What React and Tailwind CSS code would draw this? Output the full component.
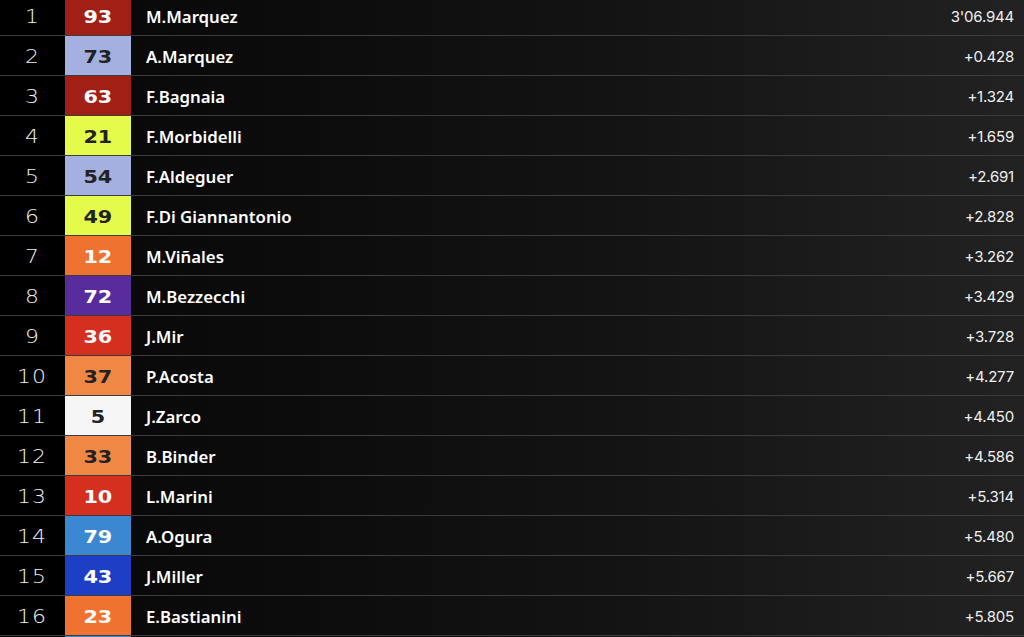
import React from "react";

const rows = [
  [1, "93", "M.Marquez", "3'06.944", "bg-[#a11f15]", "text-white"],
  [2, "73", "A.Marquez", "+0.428", "bg-[#a3b0e0]", "text-[#222]"],
  [3, "63", "F.Bagnaia", "+1.324", "bg-[#a11f15]", "text-white"],
  [4, "21", "F.Morbidelli", "+1.659", "bg-[#e5fb4c]", "text-[#222]"],
  [5, "54", "F.Aldeguer", "+2.691", "bg-[#a3b0e0]", "text-[#222]"],
  [6, "49", "F.Di Giannantonio", "+2.828", "bg-[#e5fb4c]", "text-[#222]"],
  [7, "12", "M.Viñales", "+3.262", "bg-[#ef7231]", "text-white"],
  [8, "72", "M.Bezzecchi", "+3.429", "bg-[#582c9c]", "text-white"],
  [9, "36", "J.Mir", "+3.728", "bg-[#d52f20]", "text-white"],
  [10, "37", "P.Acosta", "+4.277", "bg-[#f08845]", "text-[#222]"],
  [11, "5", "J.Zarco", "+4.450", "bg-[#f6f6f6]", "text-[#222]"],
  [12, "33", "B.Binder", "+4.586", "bg-[#f08845]", "text-[#222]"],
  [13, "10", "L.Marini", "+5.314", "bg-[#d52f20]", "text-white"],
  [14, "79", "A.Ogura", "+5.480", "bg-[#3b87d2]", "text-white"],
  [15, "43", "J.Miller", "+5.667", "bg-[#1c3fc6]", "text-white"],
  [16, "23", "E.Bastianini", "+5.805", "bg-[#ef7231]", "text-white"],
];

export default function App() {
  return (
    <div className="w-[1024px] h-[637px] overflow-hidden bg-black">
      <div className="-mt-[4px] flex flex-col">
        {rows.map(([pos, num, name, time, bg, fg]) => (
          <div key={pos} className="flex h-[40px] border-b border-[#3c3c3c] shrink-0">
            <div className="w-[65px] bg-black flex items-center justify-center text-[#f0f0f0] text-[19px] tracking-[1px] font-['DejaVu_Sans',sans-serif]">
              <span className="mt-[2px] inline-block scale-x-[1.15] font-extralight">{pos}</span>
            </div>
            <div className={`w-[66px] ${bg} ${fg} flex items-center justify-center`}>
              <span className="mt-[3px] inline-block scale-x-[1.22] text-[17px] font-black font-['DejaVu_Sans',sans-serif] leading-none">{num}</span>
            </div>
            <div className="flex-1 flex items-center justify-between pl-[15px] pr-[10px] bg-gradient-to-r from-[#090909] via-[#121212] to-[#222222]">
              <span className="mt-[4px] text-white text-[16.8px] font-semibold font-['Noto_Sans',sans-serif] leading-none">{name}</span>
              <span className="mt-[4px] text-[#f0f0f0] text-[15px] font-['Inter',sans-serif] tracking-[-0.2px]">{time}</span>
            </div>
          </div>
        ))}
        <div className="flex h-[8px] shrink-0">
          <div className="w-[65px] bg-black" />
          <div className="w-[66px] bg-[#3b87d2]" />
          <div className="flex-1 bg-gradient-to-r from-[#090909] via-[#121212] to-[#222222]" />
        </div>
      </div>
    </div>
  );
}
